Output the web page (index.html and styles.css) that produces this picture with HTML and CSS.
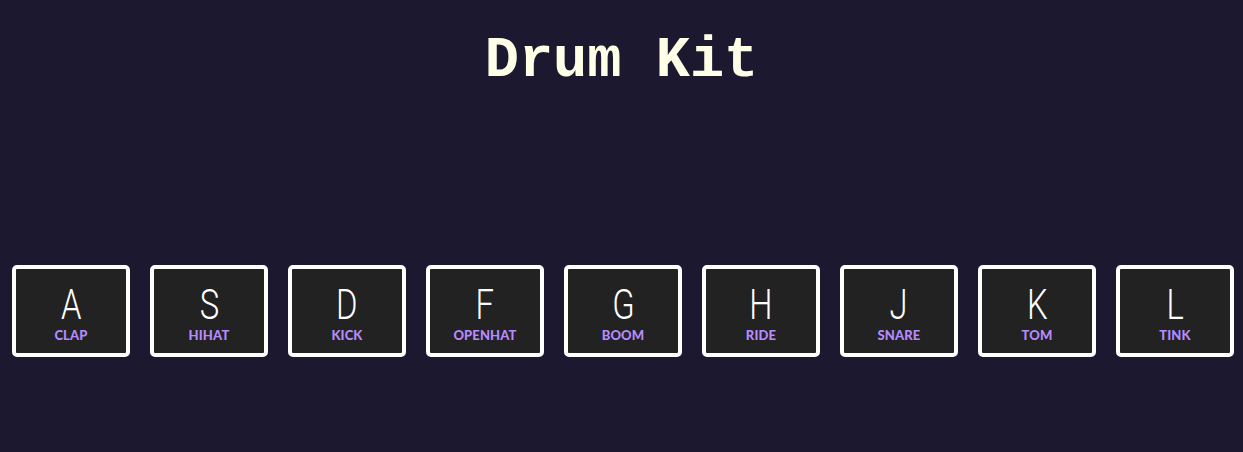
FILE: index.html
```html
<!DOCTYPE html>
<html lang="en">
<head>
<meta charset="utf-8">
<title>Drum Kit</title>
<link rel="stylesheet" href="styles.css">
</head>
<body>
<h1 class="title">Drum Kit</h1>
<div class="keys">
  <div class="key"><kbd class="key-letter">A</kbd><span class="key-sound">clap</span></div>
  <div class="key"><kbd class="key-letter">S</kbd><span class="key-sound">hihat</span></div>
  <div class="key"><kbd class="key-letter">D</kbd><span class="key-sound">kick</span></div>
  <div class="key"><kbd class="key-letter">F</kbd><span class="key-sound">openhat</span></div>
  <div class="key"><kbd class="key-letter">G</kbd><span class="key-sound">boom</span></div>
  <div class="key"><kbd class="key-letter">H</kbd><span class="key-sound">ride</span></div>
  <div class="key"><kbd class="key-letter">J</kbd><span class="key-sound">snare</span></div>
  <div class="key"><kbd class="key-letter">K</kbd><span class="key-sound">tom</span></div>
  <div class="key"><kbd class="key-letter">L</kbd><span class="key-sound">tink</span></div>
</div>
</body>
</html>
```
FILE: styles.css
```css
html, body {
  margin: 0;
  padding: 0;
  background: #1b1830;
  height: 100%;
}

body {
  font-family: "Liberation Sans", Arial, sans-serif;
}

.title {
  margin: 0;
  padding-top: 28px;
  text-align: center;
  font-family: "Liberation Mono", "Courier New", monospace;
  font-weight: 700;
  font-size: 57px;
  line-height: 66px;
  color: #fffee6;
}

.keys {
  display: flex;
  justify-content: center;
  gap: 20px;
  padding: 0 9px 0 12px;
  margin-top: 171px;
}

.key {
  box-sizing: border-box;
  width: 118px;
  height: 92px;
  border: 4px solid #ffffff;
  border-radius: 5px;
  background: #222222;
  display: flex;
  flex-direction: column;
  align-items: center;
  padding-top: 14px;
}

.key-letter {
  display: inline-block;
  font-family: Roboto, "Liberation Sans", sans-serif;
  font-weight: 300;
  font-size: 42px;
  line-height: 44px;
  color: #ffffff;
  transform: scaleX(0.78);
}

.key-sound {
  margin-top: 1px;
  font-family: Lato, "Liberation Sans", sans-serif;
  font-weight: 900;
  font-size: 13px;
  line-height: 15px;
  letter-spacing: 0.01em;
  text-transform: uppercase;
  color: #b58bff;
}
```
